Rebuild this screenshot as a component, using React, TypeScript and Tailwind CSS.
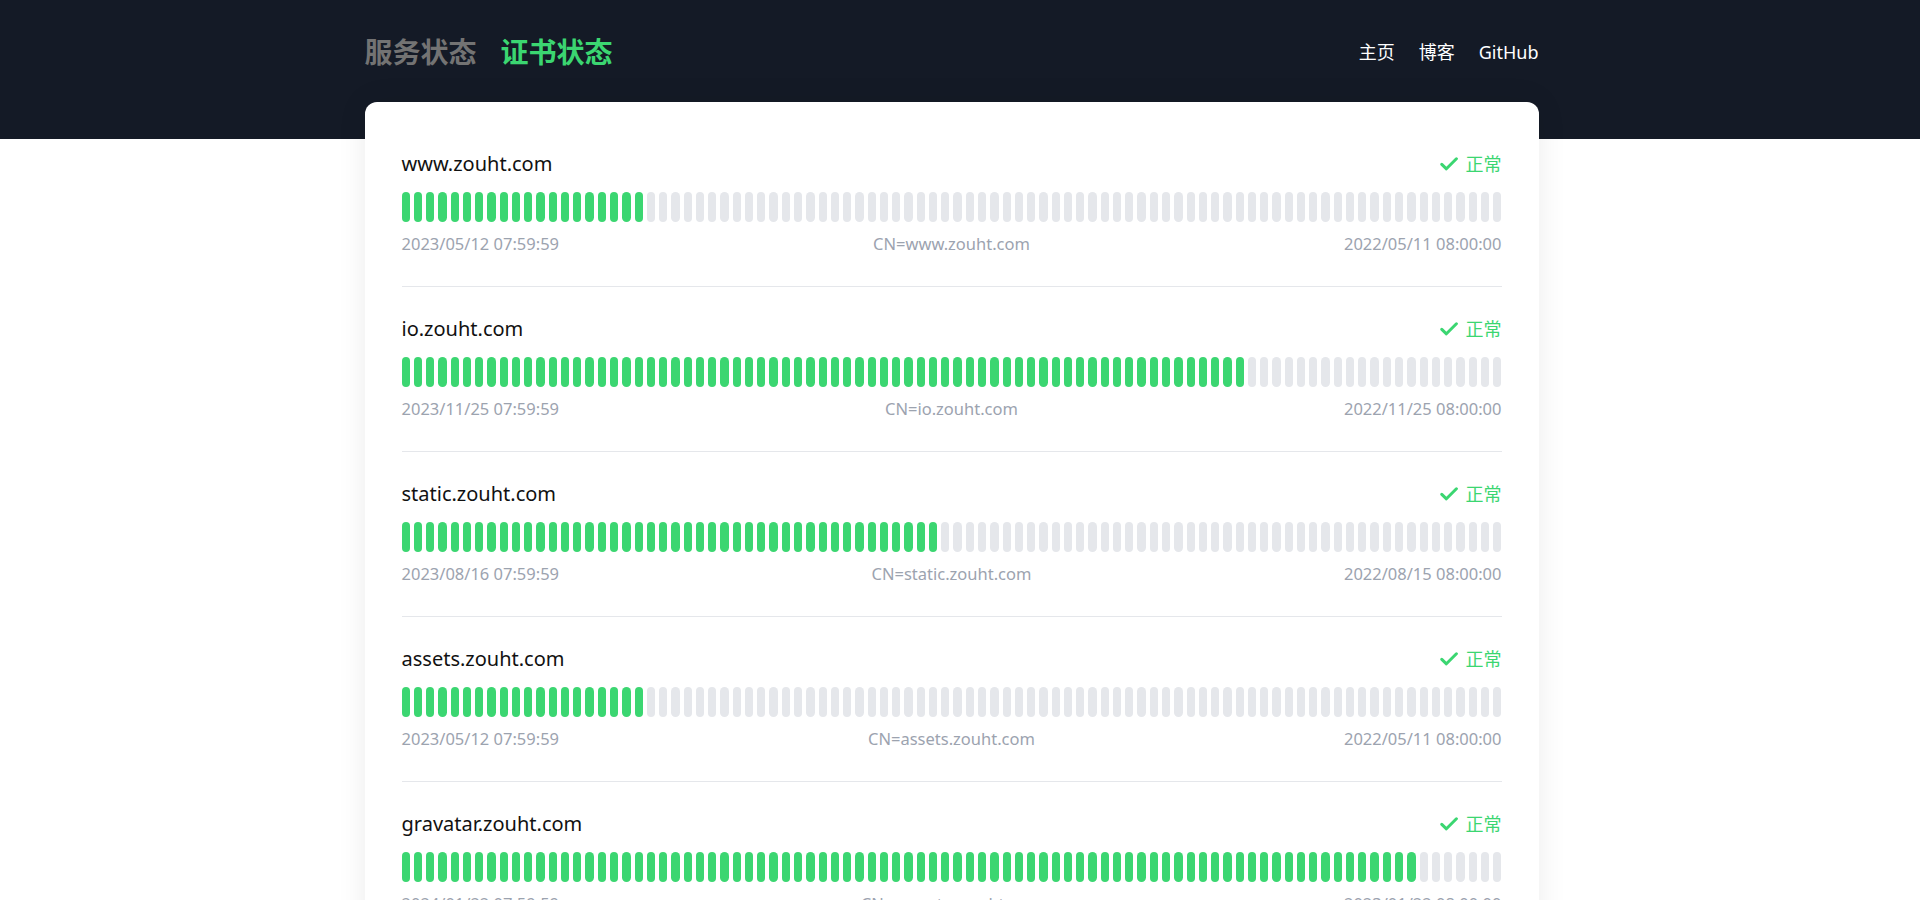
import React from "react";

type Cert = {
  domain: string;
  expire: string;
  issued: string;
  green: number;
};

const TOTAL = 90;

const certs: Cert[] = [
  { domain: "www.zouht.com", expire: "2023/05/12 07:59:59", issued: "2022/05/11 08:00:00", green: 20 },
  { domain: "io.zouht.com", expire: "2023/11/25 07:59:59", issued: "2022/11/25 08:00:00", green: 69 },
  { domain: "static.zouht.com", expire: "2023/08/16 07:59:59", issued: "2022/08/15 08:00:00", green: 44 },
  { domain: "assets.zouht.com", expire: "2023/05/12 07:59:59", issued: "2022/05/11 08:00:00", green: 20 },
  { domain: "gravatar.zouht.com", expire: "2024/01/22 07:59:59", issued: "2023/01/22 08:00:00", green: 83 },
  { domain: "cdn.zouht.com", expire: "2023/09/03 07:59:59", issued: "2022/09/02 08:00:00", green: 50 },
];

const CheckIcon = () => (
  <svg width="18" height="14" viewBox="0 0 18 14" fill="none">
    <path
      d="M1.8 7.4l4.6 4.4L16.4 1.8"
      stroke="currentColor"
      strokeWidth="3"
      strokeLinecap="round"
      strokeLinejoin="round"
    />
  </svg>
);

const CertRow = ({ cert }: { cert: Cert }) => {
  const bars = Array.from({ length: TOTAL }, (_, i) => i < cert.green);
  return (
    <div className="border-b border-[#e5e7eb] pt-[27px] pb-[30px]">
      <div className="flex h-[30px] items-center justify-between">
        <span className="text-[20px] text-[#111111]">{cert.domain}</span>
        <span className="flex items-center gap-2 text-[18px] text-[#3bd671]">
          <CheckIcon />
          正常
        </span>
      </div>
      <div className="mt-[13px] flex h-[30px] gap-1">
        {bars.map((ok, i) => (
          <div
            key={i}
            className={
              ok
                ? "h-full flex-1 rounded-full bg-[#3bd671]"
                : "h-full flex-1 rounded-full bg-[#e5e7eb]"
            }
          />
        ))}
      </div>
      <div className="mt-[10px] flex justify-between text-[16.5px] leading-6 text-[#9ca3af]">
        <span>{cert.expire}</span>
        <span>CN={cert.domain}</span>
        <span>{cert.issued}</span>
      </div>
    </div>
  );
};

export default function App() {
  return (
    <div className="min-h-screen bg-[linear-gradient(to_bottom,#141a26_0px,#141a26_139px,#ffffff_139px)] pr-[17px] pb-10 font-['Noto_Sans','Noto_Sans_CJK_SC',sans-serif]">
      <div className="mx-auto w-[1174px]">
        <header className="flex h-[72px] items-center justify-between pt-8">
          <div className="flex items-center gap-[24px] text-[28px] font-bold">
            <span className="text-[#737373]">服务状态</span>
            <span className="text-[#3bd671]">证书状态</span>
          </div>
          <nav className="flex items-center gap-6 text-[18px] text-white">
            <span>主页</span>
            <span>博客</span>
            <span>GitHub</span>
          </nav>
        </header>

        <main className="mt-[30px] rounded-xl bg-white px-[37px] pt-5 pb-4 shadow-[0_0_30px_rgba(0,0,0,0.08)]">
          {certs.map((c) => (
            <CertRow key={c.domain} cert={c} />
          ))}
        </main>
      </div>
    </div>
  );
}
